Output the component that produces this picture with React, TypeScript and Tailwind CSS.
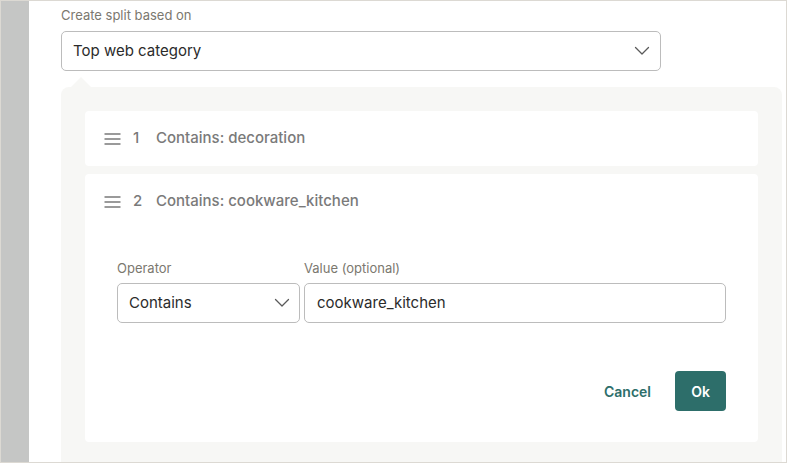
import React from "react";

function Chevron() {
  return (
    <svg width="16" height="10" viewBox="0 0 16 10" fill="none">
      <path d="M1.5 1.5 L8 8 L14.5 1.5" stroke="#5a5a5a" strokeWidth="1.3" strokeLinecap="round" strokeLinejoin="round" />
    </svg>
  );
}

function Hamburger() {
  return (
    <svg width="17" height="14" viewBox="0 0 17 14" fill="none">
      <path d="M0.5 2 H16.5 M0.5 7 H16.5 M0.5 12 H16.5" stroke="#7a7a7a" strokeWidth="1.4" />
    </svg>
  );
}

function CardHeader({ n, text }: { n: string; text: string }) {
  return (
    <div className="h-[55px] flex items-center pl-[19px] text-[15px] font-medium text-[#7a7a7a]">
      <Hamburger />
      <span className="ml-[12px] w-[23px]">{n}</span>
      <span>{text}</span>
    </div>
  );
}

export default function App() {
  return (
    <div
      className="w-[787px] h-[463px] border border-[#dcd9d3] flex overflow-hidden bg-white"
      style={{ fontFamily: "Inter, 'Noto Sans', sans-serif" }}
    >
      <div className="w-[28px] shrink-0 bg-[#c5c6c5]" />
      <div className="flex-1 pl-[32px] pr-[4px] flex flex-col">
        <div className="mt-[5px] h-[18px] leading-[18px] text-[13px] text-[#7b786f]">Create split based on</div>
        <div className="mt-[7px] w-[600px] h-[40px] rounded-[5px] border border-[#bcbcbc] flex items-center justify-between pl-[11px] pr-[10px] text-[15px] text-[#2b2b2b]">
          <span>Top web category</span>
          <Chevron />
        </div>
        <div className="relative mt-[16px] flex-1 bg-[#f7f7f5] rounded-t-[8px] px-[24px] pt-[24px] flex flex-col gap-[8px]">
          <div className="absolute left-[10px] -top-[10px] w-0 h-0 border-l-[10px] border-r-[10px] border-b-[10px] border-l-transparent border-r-transparent border-b-[#f7f7f5]" />
          <div className="bg-white rounded-[4px]">
            <CardHeader n="1" text="Contains: decoration" />
          </div>
          <div className="bg-white rounded-[4px] h-[268px] flex flex-col">
            <CardHeader n="2" text="Contains: cookware_kitchen" />
            <div className="px-[32px] mt-[30px] flex gap-[4px]">
              <div className="w-[183px] flex flex-col">
                <div className="h-[18px] leading-[18px] text-[13px] text-[#7b786f]">Operator</div>
                <div className="mt-[6px] h-[40px] rounded-[5px] border border-[#bcbcbc] flex items-center justify-between pl-[11px] pr-[9px] text-[15px] text-[#2b2b2b]">
                  <span>Contains</span>
                  <Chevron />
                </div>
              </div>
              <div className="flex-1 flex flex-col">
                <div className="h-[18px] leading-[18px] text-[13px] text-[#7b786f]">Value (optional)</div>
                <div className="mt-[6px] h-[40px] rounded-[5px] border border-[#bcbcbc] flex items-center pl-[12px] text-[15px] text-[#2b2b2b]">
                  cookware_kitchen
                </div>
              </div>
            </div>
            <div className="px-[32px] mt-[48px] flex justify-end items-center gap-[12px]">
              <button className="h-[40px] px-[12px] text-[14px] font-semibold text-[#2d6e6a]">Cancel</button>
              <button className="h-[40px] w-[51px] rounded-[4px] bg-[#2d6e6a] text-white text-[14px] font-semibold">Ok</button>
            </div>
          </div>
        </div>
      </div>
    </div>
  );
}
